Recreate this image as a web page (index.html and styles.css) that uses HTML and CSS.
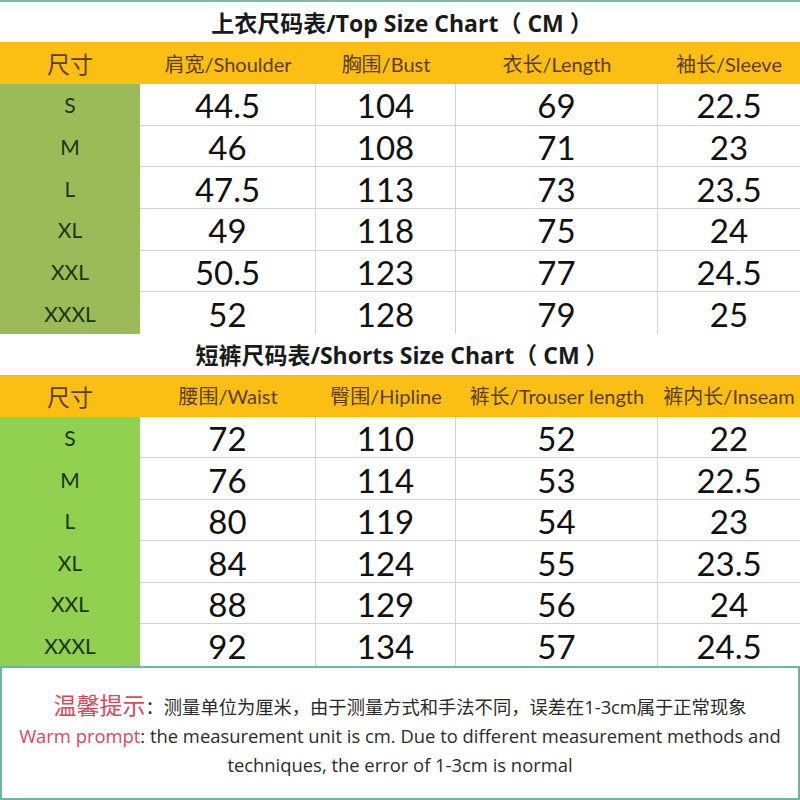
FILE: index.html
```html
<!DOCTYPE html>
<html lang="zh-CN">
<head>
<meta charset="utf-8">
<title>Size Chart</title>
<link rel="stylesheet" href="styles.css">
</head>
<body>
<main class="sheet">
  <section class="chart chart-top">
    <div class="title">上衣尺码表/Top Size Chart（ CM ）</div>
    <div class="head head-size">尺寸</div>
    <div class="head">肩宽/Shoulder</div>
    <div class="head">胸围/Bust</div>
    <div class="head">衣长/Length</div>
    <div class="head">袖长/Sleeve</div>

    <div class="size">S</div><div class="val">44.5</div><div class="val">104</div><div class="val">69</div><div class="val">22.5</div>
    <div class="size">M</div><div class="val">46</div><div class="val">108</div><div class="val">71</div><div class="val">23</div>
    <div class="size">L</div><div class="val">47.5</div><div class="val">113</div><div class="val">73</div><div class="val">23.5</div>
    <div class="size">XL</div><div class="val">49</div><div class="val">118</div><div class="val">75</div><div class="val">24</div>
    <div class="size">XXL</div><div class="val">50.5</div><div class="val">123</div><div class="val">77</div><div class="val">24.5</div>
    <div class="size">XXXL</div><div class="val last">52</div><div class="val last">128</div><div class="val last">79</div><div class="val last">25</div>
  </section>

  <section class="chart chart-bottom">
    <div class="title">短裤尺码表/Shorts Size Chart（ CM ）</div>
    <div class="head head-size">尺寸</div>
    <div class="head">腰围/Waist</div>
    <div class="head">臀围/Hipline</div>
    <div class="head">裤长/Trouser length</div>
    <div class="head">裤内长/Inseam</div>

    <div class="size">S</div><div class="val">72</div><div class="val">110</div><div class="val">52</div><div class="val">22</div>
    <div class="size">M</div><div class="val">76</div><div class="val">114</div><div class="val">53</div><div class="val">22.5</div>
    <div class="size">L</div><div class="val">80</div><div class="val">119</div><div class="val">54</div><div class="val">23</div>
    <div class="size">XL</div><div class="val">84</div><div class="val">124</div><div class="val">55</div><div class="val">23.5</div>
    <div class="size">XXL</div><div class="val">88</div><div class="val">129</div><div class="val">56</div><div class="val">24</div>
    <div class="size">XXXL</div><div class="val last">92</div><div class="val last">134</div><div class="val last">57</div><div class="val last">24.5</div>
  </section>

  <section class="note">
    <p class="line line-cn"><span class="warn warn-cn">温馨提示</span>：测量单位为厘米，由于测量方式和手法不同，误差在1-3cm属于正常现象</p>
    <p class="line"><span class="warn">Warm prompt</span>: the measurement unit is cm. Due to different measurement methods and</p>
    <p class="line">techniques, the error of 1-3cm is normal</p>
  </section>
</main>
</body>
</html>
```

FILE: styles.css
```css
* {
  box-sizing: border-box;
}

html, body {
  margin: 0;
  padding: 0;
  background: #ffffff;
}

body {
  font-family: Lato, "Noto Sans CJK SC", sans-serif;
  color: #111;
}

.sheet {
  width: 800px;
  height: 800px;
  border-top: 2px solid #7fb9a6;
  display: flex;
  flex-direction: column;
}

.chart {
  display: grid;
  grid-template-columns: 140px 176px 140px 202px 142px;
}

.chart-top {
  grid-template-rows: 40px 42px repeat(6, 41.67px);
}

.chart-bottom {
  grid-template-rows: 41px 42px repeat(6, 41.5px);
}

.chart-top .size {
  background: #9bbb59;
}

.chart-bottom .size {
  background: #92d050;
}

.title {
  grid-column: 1 / -1;
  display: flex;
  align-items: center;
  justify-content: center;
  font-family: "Open Sans", "Noto Sans CJK SC", sans-serif;
  font-weight: 700;
  font-size: 23px;
  color: #1a1a1a;
  padding-left: 4px;
  background: #fff;
  white-space: pre;
}

.head {
  background: #fbbf14;
  display: flex;
  align-items: center;
  justify-content: center;
  font-size: 20px;
  color: #5a3d0c;
  white-space: nowrap;
}

.head-size {
  font-size: 23px;
}

.size {
  display: flex;
  align-items: center;
  justify-content: center;
  font-size: 21px;
  color: #1b3512;
}

.val {
  display: flex;
  align-items: center;
  justify-content: center;
  font-size: 33px;
  color: #111;
  border-right: 1px solid #d3d3d3;
  border-bottom: 1px solid #d3d3d3;
  padding-top: 2px;
}

.val:nth-child(5n + 1) {
  border-right: none;
}

.val.last {
  border-bottom: none;
}

.note {
  flex: 1;
  border: 2px solid #6cb69c;
  padding-top: 23px;
  text-align: center;
}

.line {
  margin: 0;
  font-family: "Open Sans", "Noto Sans CJK SC", sans-serif;
  font-size: 18.4px;
  line-height: 29px;
  color: #2a2a2a;
  white-space: nowrap;
}

.line-cn {
  font-size: 18.3px;
  padding-left: 0;
}

.warn {
  color: #d9485b;
}

.warn-cn {
  font-size: 23px;
}
```
